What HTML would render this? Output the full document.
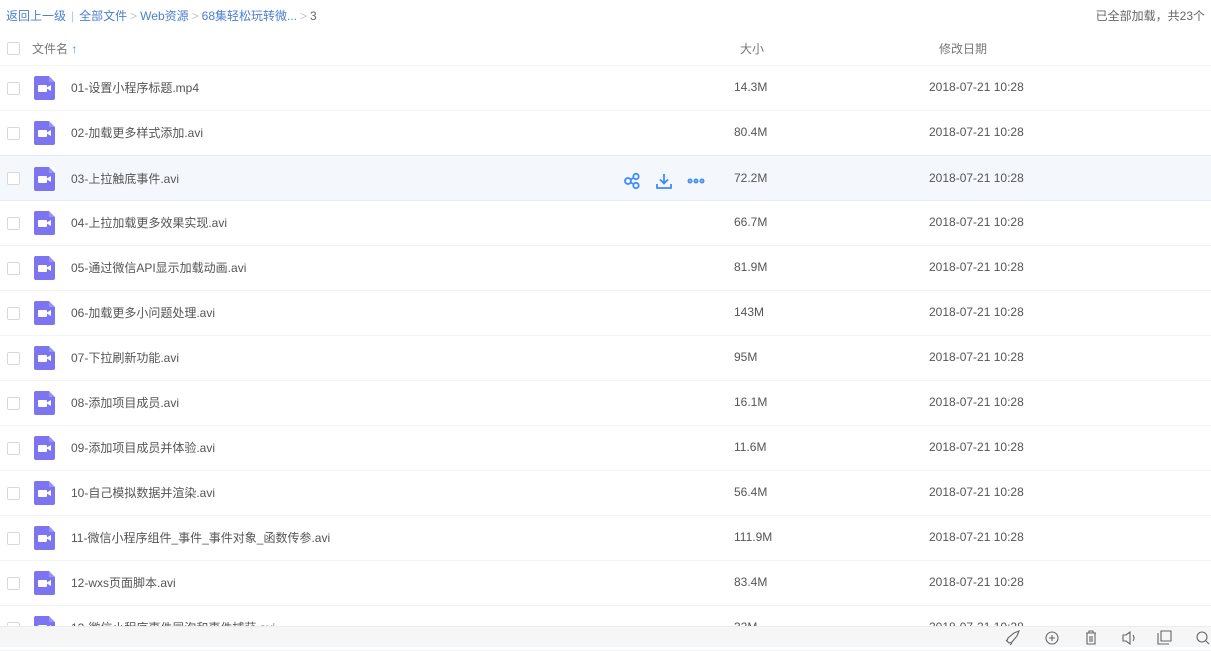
<!DOCTYPE html>
<html><head><meta charset="utf-8"><style>
*{margin:0;padding:0;box-sizing:border-box}
body{width:1211px;height:647px;overflow:hidden;background:#fff;font-family:"Liberation Sans","Noto Sans CJK SC",sans-serif;font-size:12px;color:#555;position:relative}
.bc{position:absolute;left:6px;top:7px;color:#4a7fd0;white-space:nowrap}
.bc a{color:#4a7fd0}.bc .g{color:#c0c4cc;margin:0 5px}.bc .s{color:#c0c4cc;margin:0 3px}.bc .t{color:#666}
.tot{position:absolute;right:6px;top:7px;color:#666}
.hd{position:absolute;left:0;top:32px;width:1211px;height:34px;border-bottom:1px solid #f2f3f5;color:#777}
.cb{position:absolute;left:7px;width:13px;height:13px;border:1px solid #d8d8d8;border-radius:2px;background:#fff}
.row{position:absolute;left:0;width:1211px;height:45px;border-bottom:1px solid #f2f3f5;color:#555}
.row.h{background:#f4f8fd;border-top:1px solid #e3ebf7;border-bottom:1px solid #e3ebf7}
.ic{position:absolute;left:34px;top:10px;width:21px;height:24px;background:#7d75ef;border-radius:2px}
.ic:after{content:"";position:absolute;right:0;top:0;border-style:solid;border-width:0 6px 6px 0;border-color:#fff #fff #9a93f5 #9a93f5}
.ic i{position:absolute;left:4px;top:9px;width:9px;height:7px;background:#fff;border-radius:1px}
.ic b{position:absolute;left:12px;top:9px;border-style:solid;border-width:3.5px 5px 3.5px 0;border-color:transparent #fff transparent transparent}
.nm{position:absolute;left:71px;top:13px}
.sz{position:absolute;left:734px;top:14px}
.dt{position:absolute;left:929px;top:14px}
.bar{position:absolute;left:0;top:626px;width:1211px;height:21px;background:#f6f6f6;border-top:1px solid #ececec}
</style></head><body>
<div class="bc"><a>返回上一级</a><span class="g">|</span><a>全部文件</a><span class="s">&gt;</span><a>Web资源</a><span class="s">&gt;</span><a>68集轻松玩转微...</a><span class="s">&gt;</span><span class="t">3</span></div>
<div class="tot">已全部加载，共23个</div>
<div class="hd"><div class="cb" style="top:10px"></div><span style="position:absolute;left:32px;top:8px">文件名 <span style="color:#3b8cff">&#8593;</span></span><span style="position:absolute;left:740px;top:8px">大小</span><span style="position:absolute;left:939px;top:8px">修改日期</span></div>
<div class="row" style="top:66px"><div class="cb" style="top:16px"></div><div class="ic"><i></i><b></b></div><span class="nm">01-设置小程序标题.mp4</span><span class="sz">14.3M</span><span class="dt">2018-07-21 10:28</span></div>
<div class="row" style="top:111px"><div class="cb" style="top:16px"></div><div class="ic"><i></i><b></b></div><span class="nm">02-加载更多样式添加.avi</span><span class="sz">80.4M</span><span class="dt">2018-07-21 10:28</span></div>
<div class="row h" style="top:155px;height:46px"><div class="cb" style="top:16px"></div><div class="ic" style="top:11px"><i></i><b></b></div><span class="nm" style="top:14px">03-上拉触底事件.avi</span>
<svg style="position:absolute;left:623px;top:16px" width="90" height="18" fill="none" stroke="#3b8cff" stroke-width="1.8"><circle cx="5" cy="9" r="3"/><circle cx="13" cy="4.5" r="2.7"/><circle cx="13" cy="13.5" r="2.7"/><path d="M7.5 7.5l3-1.5M7.5 10.5l3 1.5"/><path d="M41 2v9M37 7.5l4 4 4-4M34 12v4h14v-4"/><circle cx="67" cy="9" r="1.6"/><circle cx="73" cy="9" r="1.6"/><circle cx="79" cy="9" r="1.6"/></svg>
<span class="sz" style="top:15px">72.2M</span><span class="dt" style="top:15px">2018-07-21 10:28</span></div>
<div class="row" style="top:201px"><div class="cb" style="top:16px"></div><div class="ic"><i></i><b></b></div><span class="nm">04-上拉加载更多效果实现.avi</span><span class="sz">66.7M</span><span class="dt">2018-07-21 10:28</span></div>
<div class="row" style="top:246px"><div class="cb" style="top:16px"></div><div class="ic"><i></i><b></b></div><span class="nm">05-通过微信API显示加载动画.avi</span><span class="sz">81.9M</span><span class="dt">2018-07-21 10:28</span></div>
<div class="row" style="top:291px"><div class="cb" style="top:16px"></div><div class="ic"><i></i><b></b></div><span class="nm">06-加载更多小问题处理.avi</span><span class="sz">143M</span><span class="dt">2018-07-21 10:28</span></div>
<div class="row" style="top:336px"><div class="cb" style="top:16px"></div><div class="ic"><i></i><b></b></div><span class="nm">07-下拉刷新功能.avi</span><span class="sz">95M</span><span class="dt">2018-07-21 10:28</span></div>
<div class="row" style="top:381px"><div class="cb" style="top:16px"></div><div class="ic"><i></i><b></b></div><span class="nm">08-添加项目成员.avi</span><span class="sz">16.1M</span><span class="dt">2018-07-21 10:28</span></div>
<div class="row" style="top:426px"><div class="cb" style="top:16px"></div><div class="ic"><i></i><b></b></div><span class="nm">09-添加项目成员并体验.avi</span><span class="sz">11.6M</span><span class="dt">2018-07-21 10:28</span></div>
<div class="row" style="top:471px"><div class="cb" style="top:16px"></div><div class="ic"><i></i><b></b></div><span class="nm">10-自己模拟数据并渲染.avi</span><span class="sz">56.4M</span><span class="dt">2018-07-21 10:28</span></div>
<div class="row" style="top:516px"><div class="cb" style="top:16px"></div><div class="ic"><i></i><b></b></div><span class="nm">11-微信小程序组件_事件_事件对象_函数传参.avi</span><span class="sz">111.9M</span><span class="dt">2018-07-21 10:28</span></div>
<div class="row" style="top:561px"><div class="cb" style="top:16px"></div><div class="ic"><i></i><b></b></div><span class="nm">12-wxs页面脚本.avi</span><span class="sz">83.4M</span><span class="dt">2018-07-21 10:28</span></div>
<div class="row" style="top:606px"><div class="cb" style="top:16px"></div><div class="ic"><i></i><b></b></div><span class="nm">13-微信小程序事件冒泡和事件捕获.avi</span><span class="sz">32M</span><span class="dt">2018-07-21 10:28</span></div>
<div class="bar"><svg style="position:absolute;left:1005px;top:3px" width="206" height="16" fill="none" stroke="#666" stroke-width="1.1"><path d="M4 13l3-1 5-6 2-5-5 2-6 5-1 3zM3 9l-2 2M7 13l-2 2"/><circle cx="47" cy="8" r="6"/><path d="M47 5v6M44 8h6"/><path d="M81 3h10M84 3V1h4v2M82 3v11h8V3M85 6v6M87 6v6"/><path d="M118 5h3l4-3v12l-4-3h-3zM128 5q2 3 0 6"/><path d="M153 3v11h11M156 1h10v10h-10z"/><circle cx="197" cy="7" r="5"/><path d="M201 11l3 3"/></svg></div>
</body></html>
